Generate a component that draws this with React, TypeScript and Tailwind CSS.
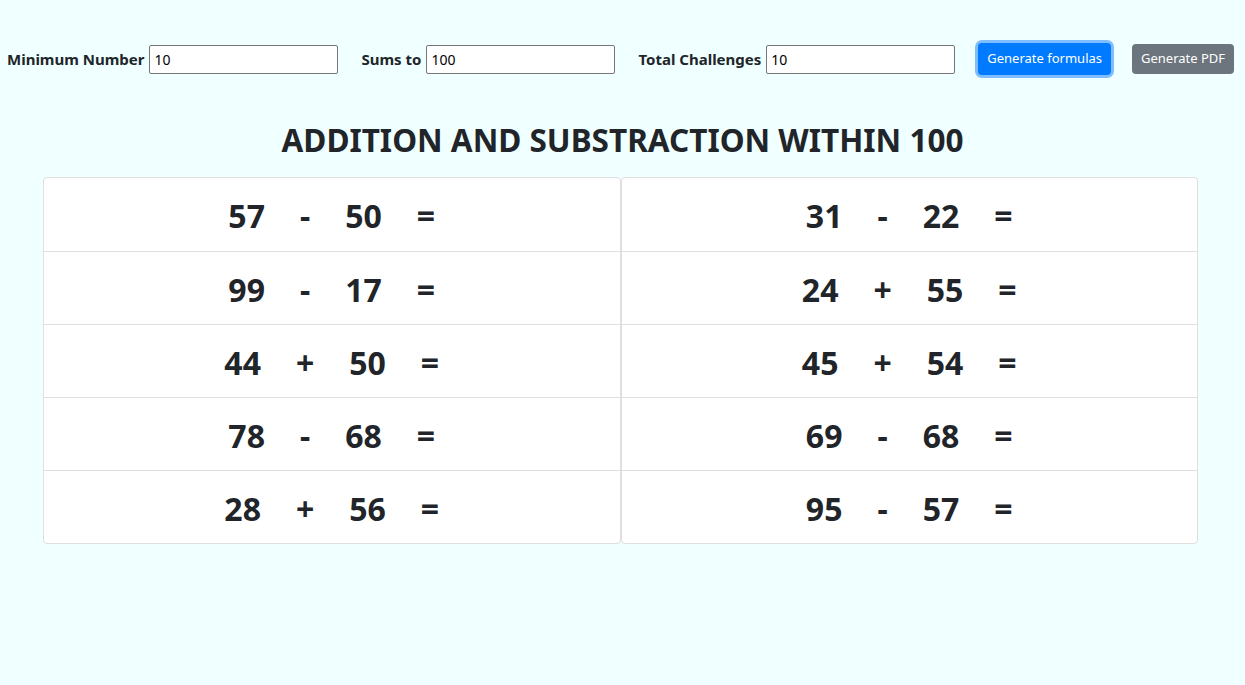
const left = [
  ['57', '-', '50'],
  ['99', '-', '17'],
  ['44', '+', '50'],
  ['78', '-', '68'],
  ['28', '+', '56'],
];

const right = [
  ['31', '-', '22'],
  ['24', '+', '55'],
  ['45', '+', '54'],
  ['69', '-', '68'],
  ['95', '-', '57'],
];

function Field({ label, value }: { label: string; value: string }) {
  return (
    <label className="flex shrink-0 items-center gap-[5px]">
      <span className="whitespace-nowrap text-[15px] font-bold text-[#212529]">{label}</span>
      <input
        defaultValue={value}
        className="h-[29px] w-[189px] rounded-[2px] border border-[#767676] bg-white px-[4px] text-[14px] text-black outline-none"
      />
    </label>
  );
}

function FormulaList({ rows }: { rows: string[][] }) {
  return (
    <div className="flex flex-1 flex-col rounded-[4px] border border-[#dfdfdf] bg-white">
      {rows.map(([a, op, b], i) => (
        <div
          key={i}
          className={`flex h-[73px] items-center justify-center gap-[35px] pt-[4px] text-[32px] font-bold text-[#212529] ${
            i > 0 ? 'border-t border-[#dfdfdf]' : ''
          }`}
        >
          <span>{a}</span>
          <span>{op}</span>
          <span>{b}</span>
          <span>=</span>
        </div>
      ))}
    </div>
  );
}

export default function App() {
  return (
    <div className="h-[685px] bg-[#f0ffff] pt-[43px] font-['Noto_Sans','Open_Sans',sans-serif]">
      <div className="flex h-[32px] items-center gap-[23px] pl-[7px]">
        <Field label="Minimum Number" value="10" />
        <Field label="Sums to" value="100" />
        <Field label="Total Challenges" value="10" />
        <div className="flex shrink-0 items-center gap-[21px]">
          <button className="h-[32px] whitespace-nowrap rounded-[4px] bg-[#007bff] px-[9px] text-[13px] text-white ring-[3px] ring-[#80bdff]">
            Generate formulas
          </button>
          <button className="h-[30px] whitespace-nowrap rounded-[4px] bg-[#6c757d] px-[9px] text-[13px] text-white">
            Generate PDF
          </button>
        </div>
      </div>
      <h2 className="mt-[46px] text-center text-[31.5px] font-bold leading-[1.2] text-[#212529]">
        ADDITION AND SUBSTRACTION WITHIN 100
      </h2>
      <div className="mx-[43px] mt-[18px] flex w-[1155px]">
        <FormulaList rows={left} />
        <FormulaList rows={right} />
      </div>
    </div>
  );
}
